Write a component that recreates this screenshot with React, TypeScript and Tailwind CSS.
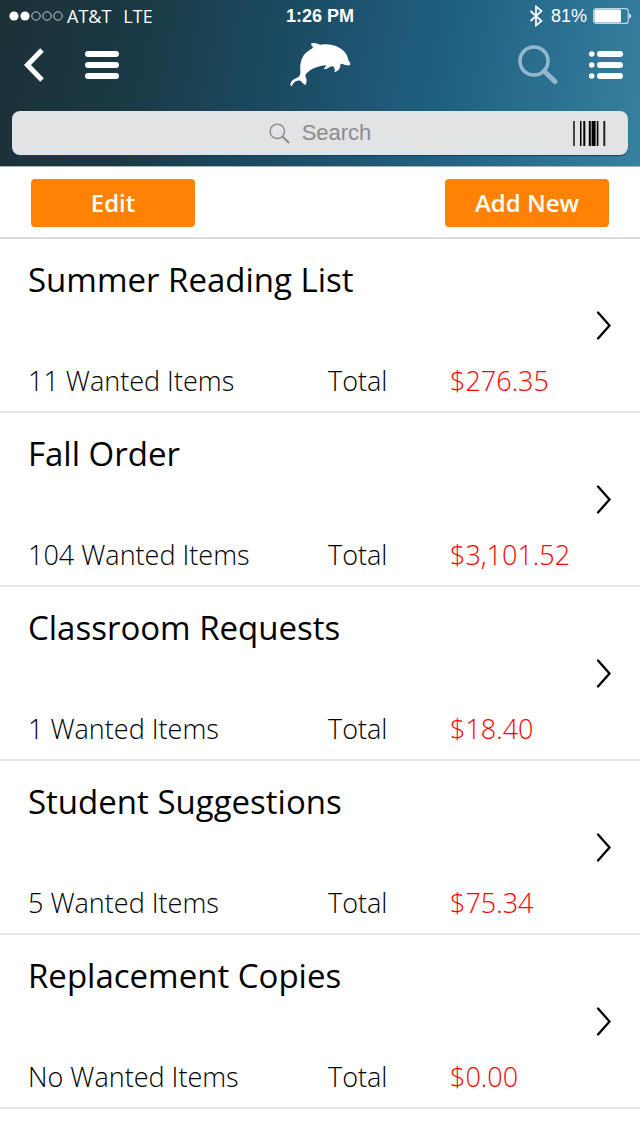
import React from "react";

interface WishList {
  id: number;
  name: string;
  items: string;
  total: string;
}

const lists: WishList[] = [
  { id: 1, name: "Summer Reading List", items: "11", total: "$276.35" },
  { id: 2, name: "Fall Order", items: "104", total: "$3,101.52" },
  { id: 3, name: "Classroom Requests", items: "1", total: "$18.40" },
  { id: 4, name: "Student Suggestions", items: "5", total: "$75.34" },
  { id: 5, name: "Replacement Copies", items: "No", total: "$0.00" },
];

const StatusBar = () => (
  <div className="grid h-8 grid-cols-[1fr_auto_1fr] items-center px-[9px] text-lg leading-8">
    <div className="flex items-center font-['Open_Sans',sans-serif]">
      <svg width="54" height="10" viewBox="0 0 54 10" className="mr-1">
        <circle cx="5" cy="5" r="4.6" fill="#fff" />
        <circle cx="16" cy="5" r="4.6" fill="#fff" />
        <g fill="none" stroke="#d5dcdf" strokeWidth="0.9">
          <circle cx="27" cy="5" r="4.2" />
          <circle cx="38" cy="5" r="4.2" />
          <circle cx="49" cy="5" r="4.2" />
        </g>
      </svg>
      <span>AT&amp;T</span>
      <span className="ml-3">LTE</span>
    </div>
    <span className="font-bold">1:26 PM</span>
    <div className="flex items-center justify-end">
      <svg
        width="14"
        height="22"
        viewBox="0 0 14 22"
        fill="none"
        stroke="#fff"
        strokeWidth="1.7"
        className="mr-2"
      >
        <path d="M1.5 6l11 10L7 20.5v-19L12.5 6l-11 10" />
      </svg>
      <span>81%</span>
      <svg width="38" height="16" viewBox="0 0 38 16" className="ml-1.5">
        <rect
          x="0.6"
          y="0.6"
          width="34.6"
          height="14.8"
          rx="2.5"
          fill="none"
          stroke="#c3d6e0"
          strokeWidth="1.2"
        />
        <rect x="1.5" y="1.5" width="26.5" height="13" rx="1.5" fill="#fff" />
        <path d="M36.3 5.2c2.2.9 2.2 4.7 0 5.6z" fill="#fff" />
      </svg>
    </div>
  </div>
);

const Dolphin = () => (
  <svg width="61" height="45" viewBox="29 18 183 135" fill="#fff">
    <path d="M92 24C95 20 105 20 112 23C116 25 119 26 123 26C141 23 163 27 178 36C192 44 202 57 203 69C204 74 210 79 210 84C209 89 204 89 199 88C194 87 190 86 187 84C184 82 182 84 180 85C182 95 174 107 162 108C166 101 162 97 159 91C153 90 149 93 144 96C140 99 134 100 130 99C134 96 136 92 137 88C119 89 98 96 84 107C77 112 75 116 75 121C80 128 80 138 76 146C71 146 67 142 64 138C61 134 57 133 52 134C43 135 38 142 34 151C29 150 29 142 33 137C39 128 51 127 57 120C61 115 60 108 60 100C59 84 63 65 74 53C82 44 92 40 98 35C98 31 91 28 92 24Z" />
  </svg>
);

const NavBar = () => (
  <nav className="grid h-[79px] grid-cols-[1fr_auto_1fr] items-start pt-2">
    <div className="flex items-center pl-6">
      <button type="button" aria-label="Back" className="py-2">
        <svg
          width="21"
          height="34"
          viewBox="0 0 21 34"
          fill="none"
          stroke="#fff"
          strokeWidth="5"
        >
          <path d="M18 2L3.5 17L18 32" />
        </svg>
      </button>
      <button type="button" aria-label="Menu" className="ml-10">
        <svg
          width="34"
          height="30"
          viewBox="0 0 34 30"
          stroke="#fff"
          strokeWidth="6"
          strokeLinecap="round"
        >
          <path d="M3 4h28M3 15h28M3 26h28" />
        </svg>
      </button>
    </div>
    <a href="#home" aria-label="Home" className="pt-0.5">
      <Dolphin />
    </a>
    <div className="flex items-center justify-end pr-4 pt-1">
      <button type="button" aria-label="Find">
        <svg
          width="43"
          height="42"
          viewBox="0 0 43 42"
          fill="none"
          stroke="#94b7cb"
        >
          <circle cx="17" cy="17" r="14" strokeWidth="3.6" />
          <path d="M27 27L38 37.5" strokeWidth="5" strokeLinecap="round" />
        </svg>
      </button>
      <button type="button" aria-label="Lists" className="ml-7">
        <svg
          width="36"
          height="30"
          viewBox="0 0 36 30"
          stroke="#fff"
          strokeWidth="6"
          strokeLinecap="round"
        >
          <path d="M12 4h20M12 15h20M12 26h20" />
          <g strokeWidth="5.4">
            <path d="M3.7 4h.1M3.7 15h.1M3.7 26h.1" />
          </g>
        </svg>
      </button>
    </div>
  </nav>
);

const SearchBar = () => (
  <div className="mx-3 grid h-11 grid-cols-[1fr_auto_1fr] items-center rounded-lg bg-[#e2e3e5] px-[22px] shadow-[0_1px_1px_#0b4265]">
    <span />
    <label className="flex items-center gap-3">
      <svg
        width="21"
        height="21"
        viewBox="0 0 21 21"
        fill="none"
        stroke="#86888b"
      >
        <circle cx="8.3" cy="8.3" r="7.2" strokeWidth="1.4" />
        <path d="M13.6 13.6L20 20" strokeWidth="2" />
      </svg>
      <input
        type="text"
        aria-label="Search"
        placeholder="Search"
        className="[field-sizing:content] bg-transparent text-[22px] leading-8 text-gray-800 outline-none placeholder:text-[#8b8c90]"
      />
    </label>
    <button type="button" aria-label="Scan barcode" className="justify-self-end">
      <svg width="33" height="25" viewBox="0 0 33 25" fill="#000">
        <rect x="0" width="2" height="25" fill="#444" />
        <rect x="7" width="1.5" height="25" />
        <rect x="10.3" width="2" height="25" />
        <rect x="15.8" width="2" height="25" />
        <rect x="18.6" width="4" height="25" />
        <rect x="23.8" width="1.6" height="25" />
        <rect x="30.3" width="2" height="25" fill="#222" />
      </svg>
    </button>
  </div>
);

const ListRow = ({ list }: { list: WishList }) => (
  <li className="border-b-2 border-[#e6e6e6]">
    <a href={`#list-${list.id}`} className="flex h-[172px] items-center px-7">
      <div className="flex h-full flex-1 flex-col justify-between pb-3 pt-[19px]">
        <h2 className="text-[33px] leading-11">{list.name}</h2>
        <div className="flex text-[27px] font-light leading-9">
          <span className="w-[300px]">{list.items} Wanted Items</span>
          <span className="w-[122px]">Total</span>
          <span className="text-[#ff0000]">{list.total}</span>
        </div>
      </div>
      <svg
        width="16"
        height="30"
        viewBox="0 0 16 30"
        fill="none"
        stroke="#000"
        strokeWidth="2.3"
        strokeLinecap="round"
      >
        <path d="M2 2.5L13.5 15.5L2 28.5" />
      </svg>
    </a>
  </li>
);

const App = () => {
  return (
    <div className="min-h-screen bg-white font-['Open_Sans',sans-serif] text-black">
      <header className="h-[166px] bg-[linear-gradient(100deg,#1d3037_0%,#1a3a45_22%,#1b4c64_45%,#205f80_68%,#2d7395_87%,#37809f_100%)] font-['Liberation_Sans',Arial,sans-serif] text-white">
        <StatusBar />
        <NavBar />
        <SearchBar />
      </header>
      <main>
        <div className="flex h-[73px] items-center justify-between border-b-2 border-[#dcdcdc] border-t border-t-[#a9b1b6] px-[31px] pt-0.5 text-2xl font-semibold text-white">
          <button type="button" className="h-12 w-[164px] rounded bg-[#ff8205]">
            Edit
          </button>
          <button type="button" className="h-12 w-[164px] rounded bg-[#ff8205]">
            Add New
          </button>
        </div>
        <ul>
          {lists.map((list) => (
            <ListRow key={list.id} list={list} />
          ))}
        </ul>
      </main>
    </div>
  );
};

export default App;
